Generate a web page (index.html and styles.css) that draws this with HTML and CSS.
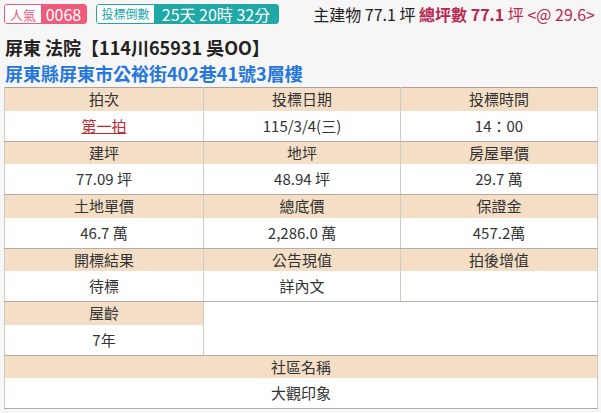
FILE: index.html
```html
<!DOCTYPE html>
<html lang="zh-Hant">
<head>
<meta charset="utf-8">
<title>屏東 法院</title>
<link rel="stylesheet" href="styles.css">
</head>
<body>
<div class="page">
  <div class="topbar">
    <span class="badge pink"><span class="lbl">人氣</span><span class="val">0068</span></span>
    <span class="badge teal"><span class="lbl">投標倒數</span><span class="val">25天 20時 32分</span></span>
    <span class="area">主建物 77.1 坪 <span class="total"><b>總坪數 77.1</b> 坪 &lt;@ 29.6&gt;</span></span>
  </div>
  <h1 class="title">屏東 法院【114川65931 吳OO】</h1>
  <div class="addr">屏東縣屏東市公裕街402巷41號3層樓</div>
  <table class="info">
    <colgroup><col class="c1"><col class="c2"><col class="c3"></colgroup>
    <tr class="hd"><th>拍次</th><th>投標日期</th><th>投標時間</th></tr>
    <tr class="vl"><td><a class="link" href="#">第一拍</a></td><td>115/3/4(三)</td><td>14：00</td></tr>
    <tr class="hd"><th>建坪</th><th>地坪</th><th>房屋單價</th></tr>
    <tr class="vl"><td>77.09 坪</td><td>48.94 坪</td><td>29.7 萬</td></tr>
    <tr class="hd"><th>土地單價</th><th>總底價</th><th>保證金</th></tr>
    <tr class="vl"><td>46.7 萬</td><td>2,286.0 萬</td><td>457.2萬</td></tr>
    <tr class="hd"><th>開標結果</th><th>公告現值</th><th>拍後增值</th></tr>
    <tr class="vl"><td>待標</td><td>詳內文</td><td></td></tr>
    <tr class="hd"><th>屋齡</th><td class="blank" colspan="2" rowspan="2"></td></tr>
    <tr class="vl"><td>7年</td></tr>
    <tr class="hd"><th colspan="3">社區名稱</th></tr>
    <tr class="vl"><td colspan="3">大觀印象</td></tr>
  </table>
</div>
</body>
</html>
```
FILE: styles.css
```css
* { box-sizing: border-box; }
html, body { margin: 0; padding: 0; background: #f6f6f6; }
body {
  font-family: "Noto Sans CJK TC", "Noto Sans", sans-serif;
  color: #333;
}
.page { padding: 4px; }

.topbar {
  display: flex;
  align-items: center;
  height: 20px;
}
.badge {
  display: inline-flex;
  align-items: stretch;
  height: 20px;
  border-radius: 3px;
}
.badge .lbl, .badge .val {
  display: flex;
  align-items: center;
  justify-content: center;
  line-height: 1;
}
.badge .lbl {
  background: #fff;
  font-size: 13px;
  border-radius: 2px 0 0 2px;
}
.badge .val {
  color: #fff;
  font-size: 16px;
}
.pink { border: 1px solid #ef5b7b; }
.pink .lbl { color: #ef5b7b; width: 36px; }
.pink .val { background: #ef5b7b; width: 45px; }
.teal { border: 1px solid #20a8a6; margin-left: 9px; }
.teal .lbl { color: #20a8a6; font-size: 12px; width: 57px; }
.teal .val { background: #20a8a6; font-size: 16px; width: 124px; }

.area {
  margin-left: auto;
  margin-right: 2px;
  font-size: 16px;
  line-height: 20px;
  color: #222;
}
.total { color: #b8284f; }
.total b { font-weight: 700; }

.title {
  margin: 10px 0 0 1px;
  font-size: 18px;
  line-height: 26px;
  font-weight: 700;
  color: #222;
}
.addr {
  margin-left: 1px;
  font-size: 18px;
  line-height: 26px;
  font-weight: 700;
  color: #2677dd;
}

.info {
  margin-top: 1px;
  width: 593px;
  table-layout: fixed;
  border-collapse: collapse;
  border: 1px solid #aaa298;
  background: #fff;
  font-size: 15px;
}
.c1 { width: 199px; }
.c2 { width: 197px; }
.c3 { width: 197px; }
.info th, .info td {
  text-align: center;
  padding: 0;
  border-left: 1px solid #d2cbc2;
  border-right: 1px solid #d2cbc2;
  color: #333;
}
.info th { font-weight: 400; background: #f4dfc6; height: 23px; line-height: 22px; }
.info .vl td { height: 30px; line-height: 30px; border-bottom: 1px solid #b5ada3; }
.info td.blank { background: #fff; border-bottom: 1px solid #b5ada3; }
.link { color: #c0282f; text-decoration: underline; }
```
